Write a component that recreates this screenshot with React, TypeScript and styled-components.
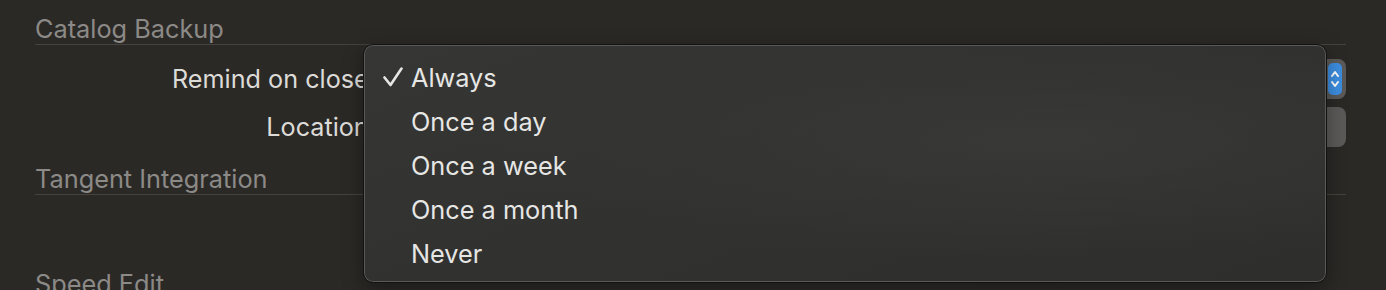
import React from "react";
import styled, { createGlobalStyle } from "styled-components";

const Global = createGlobalStyle`
  html, body { margin: 0; padding: 0; background: #2b2926; }
  body { font-family: Inter, "Noto Sans", "Liberation Sans", sans-serif; -webkit-font-smoothing: antialiased; }
`;

const Page = styled.div`
  position: relative;
  width: 1386px;
  height: 290px;
  overflow: hidden;
  background: #2b2926;
  padding: 0 40px 0 35px;
  box-sizing: border-box;
  display: flex;
  flex-direction: column;
  & > * { flex-shrink: 0; }
`;

const SectionHeader = styled.div<{ $mt: number }>`
  margin-top: ${(p) => p.$mt}px;
  font-size: 25.3px;
  line-height: 28px;
  color: #8c8a87;
  padding-bottom: 1px;
  border-bottom: 1px solid #45423f;
`;

const Rows = styled.div`
  display: flex;
  flex-direction: column;
  gap: 8px;
  margin-top: 14px;
`;

const Row = styled.div`
  display: grid;
  grid-template-columns: 341px 1fr;
  align-items: center;
  column-gap: 8px;
  height: 40px;
`;

const Label = styled.div`
  text-align: right;
  font-size: 25.2px;
  color: #dddbd8;
  white-space: nowrap;
`;

const PopUp = styled.div`
  height: 40px;
  box-sizing: border-box;
  border-radius: 8px;
  background: #5b5a58;
  display: flex;
  justify-content: flex-end;
  padding: 4px 4px;
`;

const Stepper = styled.div<{ $accent: boolean }>`
  width: 14px;
  border-radius: 5px;
  background: ${(p) => (p.$accent ? "#3d8ee0" : "transparent")};
  display: flex;
  align-items: center;
  justify-content: center;
`;

const Spacer = styled.div`
  height: 75px;
`;

const Menu = styled.div`
  position: absolute;
  left: 363px;
  top: 44px;
  width: 964px;
  height: 239px;
  box-sizing: border-box;
  border-radius: 10px;
  border: 1px solid #121210;
  box-shadow: inset 0 0 0 1px #5a5957, 0 6px 20px rgba(0, 0, 0, 0.35);
  background: radial-gradient(ellipse at 70% 40%, #383836 0%, rgba(56, 56, 54, 0) 60%),
    linear-gradient(160deg, #363634 0%, #31312f 45%, #2e2e2c 100%);
  padding: 10px 0 0 0;
  display: flex;
  flex-direction: column;
`;

const Item = styled.div`
  height: 44px;
  display: flex;
  align-items: center;
  font-size: 25.3px;
  color: #e6e6e4;
`;

const CheckCol = styled.div`
  width: 47px;
  display: flex;
  justify-content: flex-end;
  padding-right: 8px;
  box-sizing: border-box;
`;

const Check = () => (
  <svg width="20" height="20" viewBox="0 0 20 20">
    <polyline
      points="1.5,10.5 7.5,18 18.5,1.5"
      fill="none"
      stroke="#e6e6e4"
      strokeWidth="2.6"
      strokeLinecap="round"
      strokeLinejoin="round"
    />
  </svg>
);

const Chevrons = () => (
  <svg width="12" height="24" viewBox="0 0 12 24">
    <polyline points="3,9 6,5 9,9" fill="none" stroke="#fff" strokeWidth="2" strokeLinecap="round" strokeLinejoin="round" />
    <polyline points="3,15 6,19 9,15" fill="none" stroke="#fff" strokeWidth="2" strokeLinecap="round" strokeLinejoin="round" />
  </svg>
);

const options = ["Always", "Once a day", "Once a week", "Once a month", "Never"];

export default function App() {
  return (
    <>
      <Global />
      <Page>
        <SectionHeader $mt={15}>Catalog Backup</SectionHeader>
        <Rows>
          <Row>
            <Label>Remind on close:</Label>
            <PopUp>
              <Stepper $accent>
                <Chevrons />
              </Stepper>
            </PopUp>
          </Row>
          <Row>
            <Label>Location:</Label>
            <PopUp>
              <Stepper $accent={false} />
            </PopUp>
          </Row>
        </Rows>
        <SectionHeader $mt={18}>Tangent Integration</SectionHeader>
        <Spacer />
        <SectionHeader $mt={0}>Speed Edit</SectionHeader>
        <Menu>
          {options.map((o, i) => (
            <Item key={o}>
              <CheckCol>{i === 0 ? <Check /> : null}</CheckCol>
              {o}
            </Item>
          ))}
        </Menu>
      </Page>
    </>
  );
}
